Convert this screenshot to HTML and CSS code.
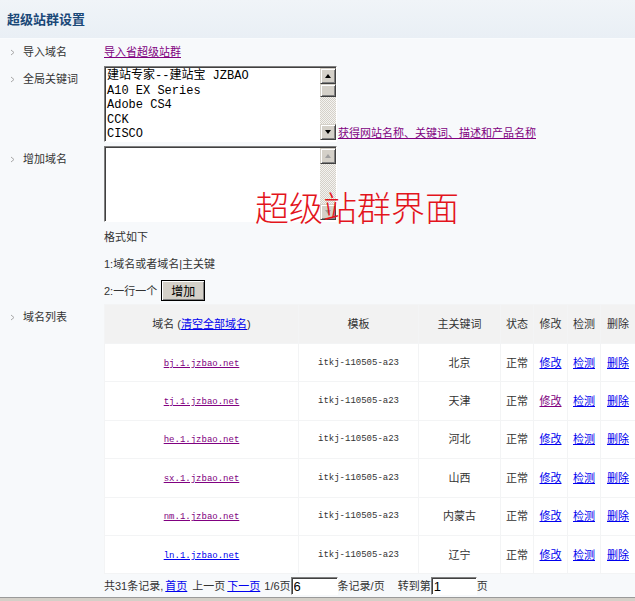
FILE: index.html
```html
<!DOCTYPE html>
<html lang="zh-CN">
<head>
<meta charset="utf-8">
<title>超级站群设置</title>
<link rel="stylesheet" href="styles.css">
</head>
<body>
<header class="top"><h1>超级站群设置</h1></header>

<div class="form">
  <div class="row r1">
    <div class="lab"><svg class="chev" width="5" height="7" viewBox="0 0 5 7"><polyline points="1,1 4,3.5 1,6" fill="none" stroke="#a8a8a8" stroke-width="1"/></svg>导入域名</div>
    <div class="val"><a href="#" class="vis">导入省超级站群</a></div>
  </div>

  <div class="row r2">
    <div class="lab"><svg class="chev" width="5" height="7" viewBox="0 0 5 7"><polyline points="1,1 4,3.5 1,6" fill="none" stroke="#a8a8a8" stroke-width="1"/></svg>全局关键词</div>
    <div class="val kw">
      <div class="ta">
        <textarea class="ta-text" readonly>建站专家--建站宝 JZBAO
A10 EX Series
Adobe CS4
CCK
CISCO</textarea>
        <div class="sb">
          <div class="sb-btn"><span class="tri up"></span></div>
          <div class="sb-btn thumb"></div>
          <div class="sb-track"></div>
          <div class="sb-btn"><span class="tri down"></span></div>
        </div>
      </div>
      <a href="#" class="vis">获得网站名称、关键词、描述和产品名称</a>
    </div>
  </div>

  <div class="row r3">
    <div class="lab"><svg class="chev" width="5" height="7" viewBox="0 0 5 7"><polyline points="1,1 4,3.5 1,6" fill="none" stroke="#a8a8a8" stroke-width="1"/></svg>增加域名</div>
    <div class="val">
      <div class="ta">
        <textarea class="ta-text" readonly></textarea>
        <div class="sb">
          <div class="sb-btn"><span class="tri up off"></span></div>
          <div class="sb-track"></div>
          <div class="sb-btn"><span class="tri down off"></span></div>
        </div>
      </div>
      <p class="note n1">格式如下</p>
      <p class="note n2">1:域名或者域名|主关键</p>
      <p class="note n3">2:一行一个 <button class="btn" type="button">增加</button></p>
    </div>
  </div>

  <div class="row r4">
    <div class="lab"><svg class="chev" width="5" height="7" viewBox="0 0 5 7"><polyline points="1,1 4,3.5 1,6" fill="none" stroke="#a8a8a8" stroke-width="1"/></svg>域名列表</div>
    <div class="val">
      <table class="list">
        <colgroup>
          <col class="c1"><col class="c2"><col class="c3"><col class="c4"><col class="c5"><col class="c6"><col class="c7">
        </colgroup>
        <thead>
          <tr><th>域名 (<a href="#" class="lnk">清空全部域名</a>)</th><th>模板</th><th>主关键词</th><th>状态</th><th>修改</th><th>检测</th><th>删除</th></tr>
        </thead>
        <tbody>
          <tr><td><a href="#" class="dom vis">bj.1.jzbao.net</a></td><td class="tpl">itkj-110505-a23</td><td>北京</td><td>正常</td><td><a href="#" class="lnk">修改</a></td><td><a href="#" class="lnk">检测</a></td><td><a href="#" class="lnk">删除</a></td></tr>
          <tr><td><a href="#" class="dom vis">tj.1.jzbao.net</a></td><td class="tpl">itkj-110505-a23</td><td>天津</td><td>正常</td><td><a href="#" class="vis">修改</a></td><td><a href="#" class="lnk">检测</a></td><td><a href="#" class="lnk">删除</a></td></tr>
          <tr><td><a href="#" class="dom vis">he.1.jzbao.net</a></td><td class="tpl">itkj-110505-a23</td><td>河北</td><td>正常</td><td><a href="#" class="lnk">修改</a></td><td><a href="#" class="lnk">检测</a></td><td><a href="#" class="lnk">删除</a></td></tr>
          <tr><td><a href="#" class="dom vis">sx.1.jzbao.net</a></td><td class="tpl">itkj-110505-a23</td><td>山西</td><td>正常</td><td><a href="#" class="lnk">修改</a></td><td><a href="#" class="lnk">检测</a></td><td><a href="#" class="lnk">删除</a></td></tr>
          <tr><td><a href="#" class="dom vis">nm.1.jzbao.net</a></td><td class="tpl">itkj-110505-a23</td><td>内蒙古</td><td>正常</td><td><a href="#" class="lnk">修改</a></td><td><a href="#" class="lnk">检测</a></td><td><a href="#" class="lnk">删除</a></td></tr>
          <tr><td><a href="#" class="dom lnk">ln.1.jzbao.net</a></td><td class="tpl">itkj-110505-a23</td><td>辽宁</td><td>正常</td><td><a href="#" class="lnk">修改</a></td><td><a href="#" class="lnk">检测</a></td><td><a href="#" class="lnk">删除</a></td></tr>
        </tbody>
      </table>
      <div class="pager">
        <span>共31条记录,</span>
        <a href="#" class="lnk">首页</a>
        <span>上一页</span>
        <a href="#" class="lnk">下一页</a>
        <span class="pg">1/6页</span><input class="inp w1" value="6"><span class="per">条记录/页</span>
        <span class="goto">转到第</span><input class="inp w2" value="1"><span>页</span>
      </div>
    </div>
  </div>
</div>

<div class="bottom-bar"></div>

<div class="stamp">超级站群界面</div>
</body>
</html>
```

FILE: styles.css
```css
html, body {
  margin: 0;
  padding: 0;
  overflow: hidden;
}
body {
  background: #f7f9fb;
  font-family: "Liberation Sans", "Noto Sans CJK SC", sans-serif;
  font-size: 11px;
  color: #333;
  width: 635px;
  height: 601px;
  position: relative;
}
a { text-decoration: underline; }
.vis { color: #800080; }
.lnk { color: #0000ee; }

.top {
  height: 38px;
  background: linear-gradient(#f0f4f8, #e9eff5);
  border-bottom: 1px solid #f9fbfd;
  display: flex;
  align-items: center;
}
.top h1 {
  margin: 0 0 0 7px;
  font-size: 13px;
  font-weight: bold;
  color: #1a4878;
  font-family: "Noto Sans CJK SC", sans-serif;
  line-height: 18px;
}

.form { padding-top: 4px; }
.row {
  display: grid;
  grid-template-columns: 104px auto;
}
.lab {
  display: flex;
  align-items: center;
  height: 18px;
  padding-left: 10px;
  line-height: 18px;
}
.chev { margin-right: 8px; flex: none; }
.val { line-height: 18px; }

.r1 { height: 18px; }
.r2 { margin-top: 5px; }
.r2 .lab { margin-top: 4px; }
.kw { display: flex; align-items: flex-end; }
.kw a { line-height: 18px; margin-left: 1px; }
.r3 { margin-top: 4px; }
.r3 .lab { margin-top: 4px; }
.r4 { margin-top: 3px; }
.r4 .lab { margin-top: 4px; }

.ta {
  width: 233px;
  height: 76px;
  box-sizing: border-box;
  display: flex;
  border-style: solid;
  border-width: 1px;
  border-color: #808080 #ffffff #ffffff #808080;
  box-shadow: inset 1px 1px 0 #404040;
  padding: 1px 0 1px 1px;
  background: #fff;
}
.ta-text {
  flex: 1;
  min-width: 0;
  border: 0;
  margin: 0;
  padding: 1px 0 0 1px;
  outline: none;
  resize: none;
  overflow: hidden;
  background: #fff;
  font-family: "Liberation Mono", "Noto Sans CJK SC", monospace;
  font-size: 12px;
  line-height: 14.6px;
  color: #000;
}
.sb {
  width: 16px;
  display: flex;
  flex-direction: column;
}
.sb-btn {
  height: 16px;
  box-sizing: border-box;
  background: #d4d0c8;
  border: 1px solid;
  border-color: #d4d0c8 #404040 #404040 #d4d0c8;
  box-shadow: inset 1px 1px 0 #fff, inset -1px -1px 0 #808080;
  display: flex;
  align-items: center;
  justify-content: center;
  flex: none;
}
.sb-btn.thumb { height: 13px; }
.sb-track {
  flex: 1;
  background: repeating-conic-gradient(#d4d0c8 0 25%, #f4f3f0 0 50%) 0 0 / 2px 2px;
}
.tri {
  width: 0;
  height: 0;
  border-left: 3.5px solid transparent;
  border-right: 3.5px solid transparent;
}
.tri.up { border-bottom: 4px solid #000; }
.tri.down { border-top: 4px solid #000; }
.tri.up.off { border-bottom-color: #a0a0a0; }
.tri.down.off { border-top-color: #a0a0a0; }

.note { margin: 0; height: 18px; line-height: 18px; }
.n1 { margin-top: 6px; }
.n2 { margin-top: 9px; }
.n3 {
  margin-top: 7px;
  height: 21px;
  display: flex;
  align-items: center;
}
.btn {
  margin-left: 4px;
  width: 44px;
  height: 21px;
  padding: 0;
  background: #d4d0c8;
  border: 1px solid #000;
  box-shadow: inset 1px 1px 0 #fff, inset -1px -1px 0 #808080;
  font-family: "Noto Sans CJK SC", sans-serif;
  font-size: 12px;
  color: #000;
  line-height: 19px;
}

.list {
  table-layout: fixed;
  width: 532px;
  border-collapse: separate;
  border-spacing: 1px;
  background: #f3f4f5;
}
.c1 { width: 193px; }
.c2 { width: 119px; }
.c3 { width: 81px; }
.c4 { width: 32px; }
.c5 { width: 33px; }
.c6 { width: 32px; }
.c7 { width: 34px; }
.list th, .list td {
  padding: 0;
  text-align: center;
  font-weight: normal;
  color: #333;
  white-space: nowrap;
  overflow: hidden;
}
.list th {
  height: 38px;
  background: #f2f2f2;
}
.list td {
  height: 37.4px;
  background: #fff;
}
.dom, .tpl {
  font-family: "Liberation Mono", monospace;
  font-size: 9px;
}
.tpl { color: #222; }

.pager {
  margin-top: 2px;
  height: 20px;
  display: flex;
  align-items: center;
  white-space: nowrap;
}
.pager > * { flex: none; }
.pager a { margin-left: 2px; margin-right: 5px; }
.pager .pg { margin-left: -1px; }
.goto { margin-left: 13px; }
.inp {
  height: 18px;
  box-sizing: border-box;
  border-style: solid;
  border-width: 1px;
  border-color: #808080 #ffffff #ffffff #808080;
  box-shadow: inset 1px 1px 0 #404040;
  background: #fff;
  padding: 0 0 0 2px;
  font-family: "Liberation Sans", sans-serif;
  font-size: 13px;
  color: #000;
  outline: none;
  margin: 0;
}
.w1 { width: 47px; }
.w2 { width: 46px; }

.bottom-bar {
  margin-top: 1px;
  height: 20px;
  background: #d4d0c8;
  border-top: 1px solid #9a9a9a;
}

.stamp {
  position: absolute;
  left: 255px;
  top: 189px;
  font-family: "Noto Sans CJK SC", sans-serif;
  font-size: 34px;
  font-weight: 300;
  line-height: 36px;
  color: #e3141c;
  white-space: nowrap;
}
```
